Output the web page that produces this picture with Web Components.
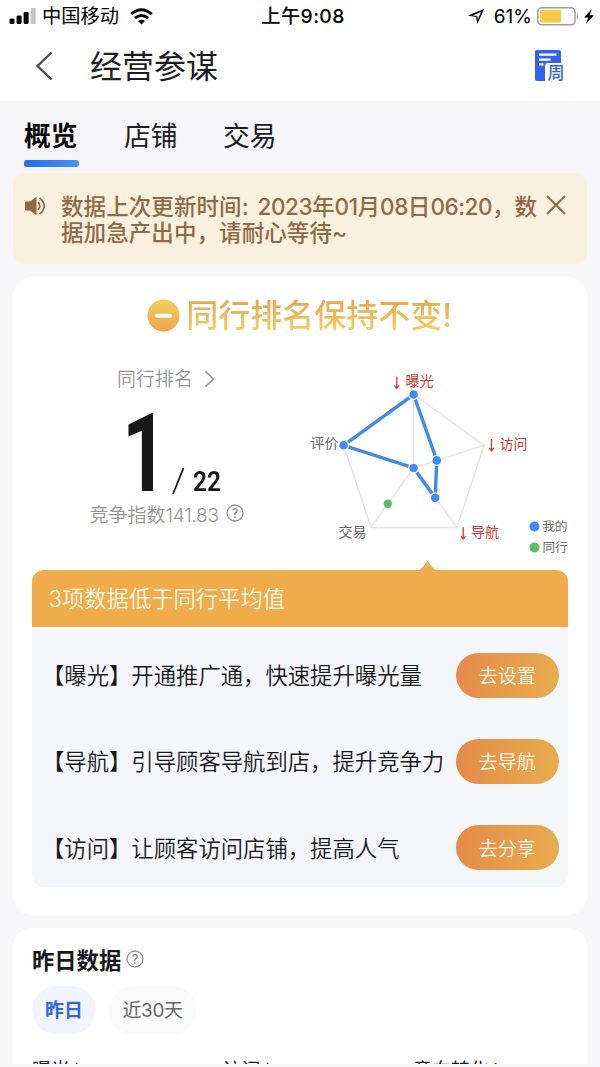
<!DOCTYPE html>
<html lang="zh-CN">
<head>
<meta charset="utf-8">
<title>经营参谋</title>
<style>
html,body{margin:0;padding:0}
body{width:600px;height:1067px;overflow:hidden;background:#f6f6f9;font-family:Inter,"Noto Sans CJK SC",sans-serif;color:#17181a}
</style>
</head>
<body>
<advisor-page></advisor-page>
<script>
const define = (name, html) => {
  const template = document.createElement('template');
  template.innerHTML = '<style>*{box-sizing:border-box}:host{display:block;box-sizing:border-box;white-space:nowrap}svg{display:block;flex:none;overflow:visible}</style>' + html;
  customElements.define(name, class extends HTMLElement {
    constructor() {
      super();
      this.attachShadow({mode: 'open'}).append(template.content.cloneNode(true));
    }
  });
};

define('status-bar', `
<style>
:host{display:grid;grid-template-columns:1fr auto 1fr;align-items:center;height:33px;padding:0 6px 0 9px;font-size:19.3px;line-height:33px;color:#000}
.side{display:flex;align-items:center}
.end{justify-content:flex-end}
.time{font-weight:500;letter-spacing:.4px;padding-left:3px}
</style>
<div class="side">
  <svg width="28" height="17" viewBox="0 0 28 17"><rect x=".5" y="10.500" width="5" height="5.500" rx="1.300"/><rect x="7.600" y="7.500" width="5" height="8.500" rx="1.300"/><rect x="14.600" y="4" width="5" height="12" rx="1.300"/><rect x="21.700" y="0" width="5" height="16" rx="1.300" fill="#c4c4c4"/></svg>
  <span style="margin-left:5px">中国移动</span>
  <svg style="margin-left:11px" width="23" height="17" viewBox="0 0 23 17" fill="none" stroke="#000" stroke-width="2.900"><path d="M1.200 6.200Q11.500-2.600 21.800 6.200M5 10.200Q11.500 4.600 18 10.200"/><path d="M8 13Q11.500 10.300 15 13L11.500 16.500Z" fill="#000" stroke="none"/></svg>
</div>
<div class="time">上午9:08</div>
<div class="side end">
  <svg width="16" height="15" viewBox="0 0 16 15"><path fill-rule="evenodd" d="M0 6.600 16 0 9.400 15 8 8ZM4.600 6.400 9.200 6.900 9.900 10.600 13 3Z"/></svg>
  <span style="margin-left:10px;font-size:19px">61%</span>
  <svg style="margin-left:5px" width="43" height="19" viewBox="0 0 43 19"><rect x=".8" y=".8" width="37.200" height="17" rx="4" fill="#fff" stroke="#9d9d9d" stroke-width="1.500"/><rect x="3" y="3" width="21" height="12.600" rx="1" fill="#f7cb46"/><path d="M39.700 6.200q2.500 3.200 0 6.400z" fill="#9d9d9d"/></svg>
  <svg style="margin-left:4px" width="10" height="15" viewBox="0 0 10 15"><path d="M7.800 0 0 8.500H4.200L2 15 10 6.200H5.600Z"/></svg>
</div>`);

define('nav-bar', `
<style>
:host{display:flex;align-items:center;height:68px;padding:0 34px 2px 35px}
.title{flex:1;margin-left:37px;font-size:32px;line-height:46px;color:#1c1c1e;padding-top:1px}
text{font:500 17px "Noto Sans CJK SC",sans-serif}
</style>
<svg width="18" height="30" viewBox="0 0 18 30"><path d="M16.500 1.500 2.500 15 16.500 28.500" fill="none" stroke="#4b4b4b" stroke-width="2.300"/></svg>
<div class="title"><slot></slot></div>
<svg width="31" height="31" viewBox="0 0 31 31"><path d="M1.500-1H24a2 2 0 0 1 2 2V12H13a3 3 0 0 0-3 3V30H2a2 2 0 0 1-2-2V.5Q0-1 1.500-1Z" fill="#3064ee"/><path d="M4 3.700H21.500M4 8.600H15.500M4 13.300H8.500" stroke="#fff" stroke-width="2.200"/><text x="12.500" y="27.500" fill="#3064ee">周</text></svg>`);

define('tab-item', `
<style>
:host{height:60px;font-size:26.800px;line-height:70px;color:#1c1c1e}
:host([active]){font-weight:700;color:#060606}
i{display:none;height:6.500px;width:54.500px;border-radius:3px;background:linear-gradient(90deg,#2d66ef,#4297f4);margin-top:-11px}
:host([active]) i{display:block}
</style><slot></slot><i></i>`);

define('tab-strip', `
<style>:host{display:flex;gap:45.400px;height:72px;padding-left:24px}</style><slot></slot>`);

define('notice-bar', `
<style>
:host{display:flex;height:91px;margin:0 13px;border-radius:12px;background:#f9f0de;color:#8f6a46;padding:21px 21px 0 12px;font-size:22.500px;line-height:26px;font-weight:500}
.text{flex:1;margin-left:15px;letter-spacing:.08px}
::slotted(span){letter-spacing:-.48px}
::slotted(b){font-weight:500;margin-left:3.500px;letter-spacing:-.48px}
</style>
<svg style="margin-top:2px" width="21" height="20" viewBox="0 0 21 20"><path d="M0 5.500H5L11.500.8V19.200L5 14.500H0Z" fill="#8f6a46"/><path d="M13 6Q16.500 10 13 14M14.500 1.800Q24 10 14.500 18.200" fill="none" stroke="#8f6a46" stroke-width="1.700"/></svg>
<div class="text"><slot></slot></div>
<svg style="margin-top:1px" width="20" height="20" viewBox="0 0 20 20"><path d="M1 1 19 19M19 1 1 19" stroke="#8f6a46" stroke-width="2"/></svg>`);

define('help-icon', `
<style>:host{width:18px;height:18px}text{font:500 12.500px Inter,sans-serif}</style>
<svg width="18" height="18" viewBox="0 0 18 18"><circle cx="9" cy="9" r="8" fill="none" stroke="#929292" stroke-width="1.300"/><text x="9" y="13.500" text-anchor="middle" fill="#888">?</text></svg>`);

define('rank-headline', `
<style>
:host{display:flex;align-items:center;justify-content:center;height:76px;padding-right:1px}
b{font-size:32px;line-height:44px;font-weight:500;margin:2px 0 0 6px;color:transparent;background:linear-gradient(#e9a54e 15%,#f5cf63 85%);-webkit-background-clip:text;background-clip:text}
</style>
<svg width="33" height="33" viewBox="0 0 33 33"><defs><linearGradient id="g" x2="0" y2="1"><stop stop-color="#f4ce61"/><stop offset="1" stop-color="#eda54b"/></linearGradient></defs><circle cx="16.500" cy="16.500" r="16" fill="url(#g)"/><path d="M10 16.700H23" stroke="#fff" stroke-width="4" stroke-linecap="round"/></svg>
<b><slot></slot></b>`);

define('rank-score', `
<style>
:host{display:flex;flex-direction:column;align-items:flex-start;width:277px;color:#949494;font-size:19px}
.top{display:flex;align-items:center;gap:11px;height:30px;line-height:30px;margin:1px 0 0 104px;font-weight:350}
.top span{padding-top:2px}
.num{display:flex;align-items:flex-end;height:78px;margin:20px 0 0 109px;color:#171717;font-family:Roboto,sans-serif}
.big{width:45px;font-size:110px;line-height:78px;font-weight:700;transform:translateY(1px) scaleX(.72);transform-origin:0 50%}
.all{font-size:28px;line-height:20px;font-weight:600;transform:scaleX(.87);transform-origin:0 50%;margin:0 0 0 8px}
.index{display:flex;align-items:center;gap:7px;height:38px;margin:2px 0 0 76.500px;font-weight:350}
.index b{font-weight:350;letter-spacing:-.25px}
</style>
<div class="top"><span>同行排名</span><svg width="11" height="18" viewBox="0 0 11 18"><path d="M1.500 1.500 9.500 9 1.500 16.500" fill="none" stroke="#949494" stroke-width="1.700"/></svg></div>
<div class="num"><span class="big">1</span><svg style="margin:0 0 -3px 5px" width="13" height="30" viewBox="0 0 13 30"><path d="M1 29 11.500 3" stroke="#171717" stroke-width="1.800"/></svg><span class="all">22</span></div>
<div class="index"><span>竞争指数<b>141.83</b></span><help-icon></help-icon></div>`);

define('radar-chart', `
<style>
:host{width:278px;height:206px}
text{font:14px Inter,"Noto Sans CJK SC",sans-serif;fill:#666}
.low{fill:#d5372f}
.key{font-size:12.500px}
</style>
<svg width="278" height="206" viewBox="300 363 278 206">
<path d="M413.600 394.500 484 445.300 457 527.500H371L343.600 445.300ZM413.600 468V394.500M413.600 468 484 445.300M413.600 468 457 527.500M413.600 468 371 527.500" fill="none" stroke="#e5e5e5" stroke-width="1.500"/>
<path d="M413.600 394.500 436.800 460.400 435.200 497.800 413.600 468 343.600 445.300Z" fill="none" stroke="#4289e8" stroke-width="3.400"/>
<g fill="#418bf3" stroke="#fff" stroke-width="1.200"><circle cx="413.600" cy="394.500" r="4.900"/><circle cx="436.800" cy="460.400" r="4.900"/><circle cx="435.200" cy="497.800" r="4.900"/><circle cx="413.600" cy="468" r="4.900"/><circle cx="343.600" cy="445.300" r="4.900"/></g>
<circle cx="387.800" cy="503.800" r="4.200" fill="#5ebb67"/>
<g fill="none" stroke="#d5372f" stroke-width="1.300"><path id="a" d="M396.800 376.500V388M394.500 385.500 396.800 388.200 399.100 385.500"/><use href="#a" x="94.700" y="62.500"/><use href="#a" x="66.400" y="150.700"/></g>
<text class="low" x="405.500" y="386">曝光</text><text class="low" x="499.500" y="448.500">访问</text><text class="low" x="471" y="536.500">导航</text>
<text x="310.500" y="448">评价</text><text x="338.500" y="536.500">交易</text>
<circle cx="534.500" cy="526.500" r="5" fill="#418bf3"/><text class="key" x="542.500" y="531">我的</text>
<circle cx="534.500" cy="547.500" r="5" fill="#5ebb67"/><text class="key" x="542.500" y="552">同行</text>
</svg>`);

define('advice-row', `
<style>
:host{display:flex;align-items:center;justify-content:space-between;height:86.300px;padding:0 9.500px 0 10px;font-size:22.350px;font-weight:350;color:#17181a}
.msg{padding-bottom:2px}
button{width:102.500px;height:45px;border:0;border-radius:23px;padding:0 0 1px;background:linear-gradient(100deg,#e48a4a,#e8ad4f);color:#fff8e8;font:350 19px Inter,"Noto Sans CJK SC",sans-serif}
</style><span class="msg"><slot></slot></span><button><slot name="action"></slot></button>`);

define('advice-panel', `
<style>
:host{position:relative;height:317px;margin:0 19px;border-radius:12px;background:#f5f6fa}
header{height:57px;border-radius:12px 12px 0 0;background:#f0ab4a;color:#fff8e8;font-size:22.300px;font-weight:350;line-height:57px;padding-left:16.500px}
.tip{position:absolute;left:386px;top:-9px}
.rows{padding-top:5px}
</style>
<svg class="tip" width="19" height="10" viewBox="0 0 19 10"><path d="M0 10Q2 9.500 9.500 0 17 9.500 19 10Z" fill="#f0ab4a"/></svg>
<header><slot name="title"></slot></header><div class="rows"><slot></slot></div>`);

define('rank-card', `
<style>
:host{height:638px;margin:13px 13px 0;border-radius:19px;background:#fff}
.stats{display:flex;height:217px;padding-top:10px}
</style>
<rank-headline>同行排名保持不变!</rank-headline>
<div class="stats"><rank-score></rank-score><radar-chart style="margin-left:10px"></radar-chart></div>
<advice-panel><span slot="title">3项数据低于同行平均值</span>
<advice-row>【曝光】开通推广通，快速提升曝光量<span slot="action">去设置</span></advice-row>
<advice-row>【导航】引导顾客导航到店，提升竞争力<span slot="action">去导航</span></advice-row>
<advice-row>【访问】让顾客访问店铺，提高人气<span slot="action">去分享</span></advice-row>
</advice-panel>`);

define('range-pill', `
<style>
:host{height:48px;line-height:49px;border-radius:24px;padding:0 13.500px;font-size:18.900px;letter-spacing:-.3px;background:#fafafa;color:#666}
:host([active]){background:#f1f5ff;color:#3064e6;font-weight:600;padding:0 13px;letter-spacing:.1px}
</style><slot></slot>`);

define('metric-link', `
<style>:host{display:flex;align-items:center;gap:5px;font-size:19px;line-height:30px;color:#1c1c1e}</style>
<slot></slot><svg width="9" height="17" viewBox="0 0 9 17"><path d="M1 .4 8 8.500 1 16.600" fill="none" stroke="#1c1c1e" stroke-width="2"/></svg>`);

define('daily-card', `
<style>
:host{height:136px;overflow:hidden;margin:13px 13px 0;border-radius:19px 19px 0 0;background:#fff;padding:14px 19px 0}
.head{display:flex;align-items:center;gap:5px;height:34px;font-size:22.300px;font-weight:600}
.pills{display:flex;gap:13px;margin-top:10px}
.metrics{display:grid;grid-template-columns:190.500px 190.500px 1fr;margin-top:22px}
</style>
<div class="head"><span>昨日数据</span><help-icon></help-icon></div>
<div class="pills"><range-pill active>昨日</range-pill><range-pill>近30天</range-pill></div>
<div class="metrics"><metric-link>曝光</metric-link><metric-link>访问</metric-link><metric-link>意向转化</metric-link></div>`);

define('advisor-page', `
<style>
:host{width:600px;height:1067px;overflow:hidden;background:#f6f6f9}
.bar{background:#fff}
</style>
<div class="bar"><status-bar></status-bar><nav-bar>经营参谋</nav-bar></div>
<tab-strip><tab-item active>概览</tab-item><tab-item>店铺</tab-item><tab-item>交易</tab-item></tab-strip>
<notice-bar>数据上次更新时间:<b> 2023</b>年<span>01</span>月<span>08</span>日<span>06:20</span>，数<br>据加急产出中，请耐心等待~</notice-bar>
<rank-card></rank-card>
<daily-card></daily-card>`);
</script>
</body>
</html>
